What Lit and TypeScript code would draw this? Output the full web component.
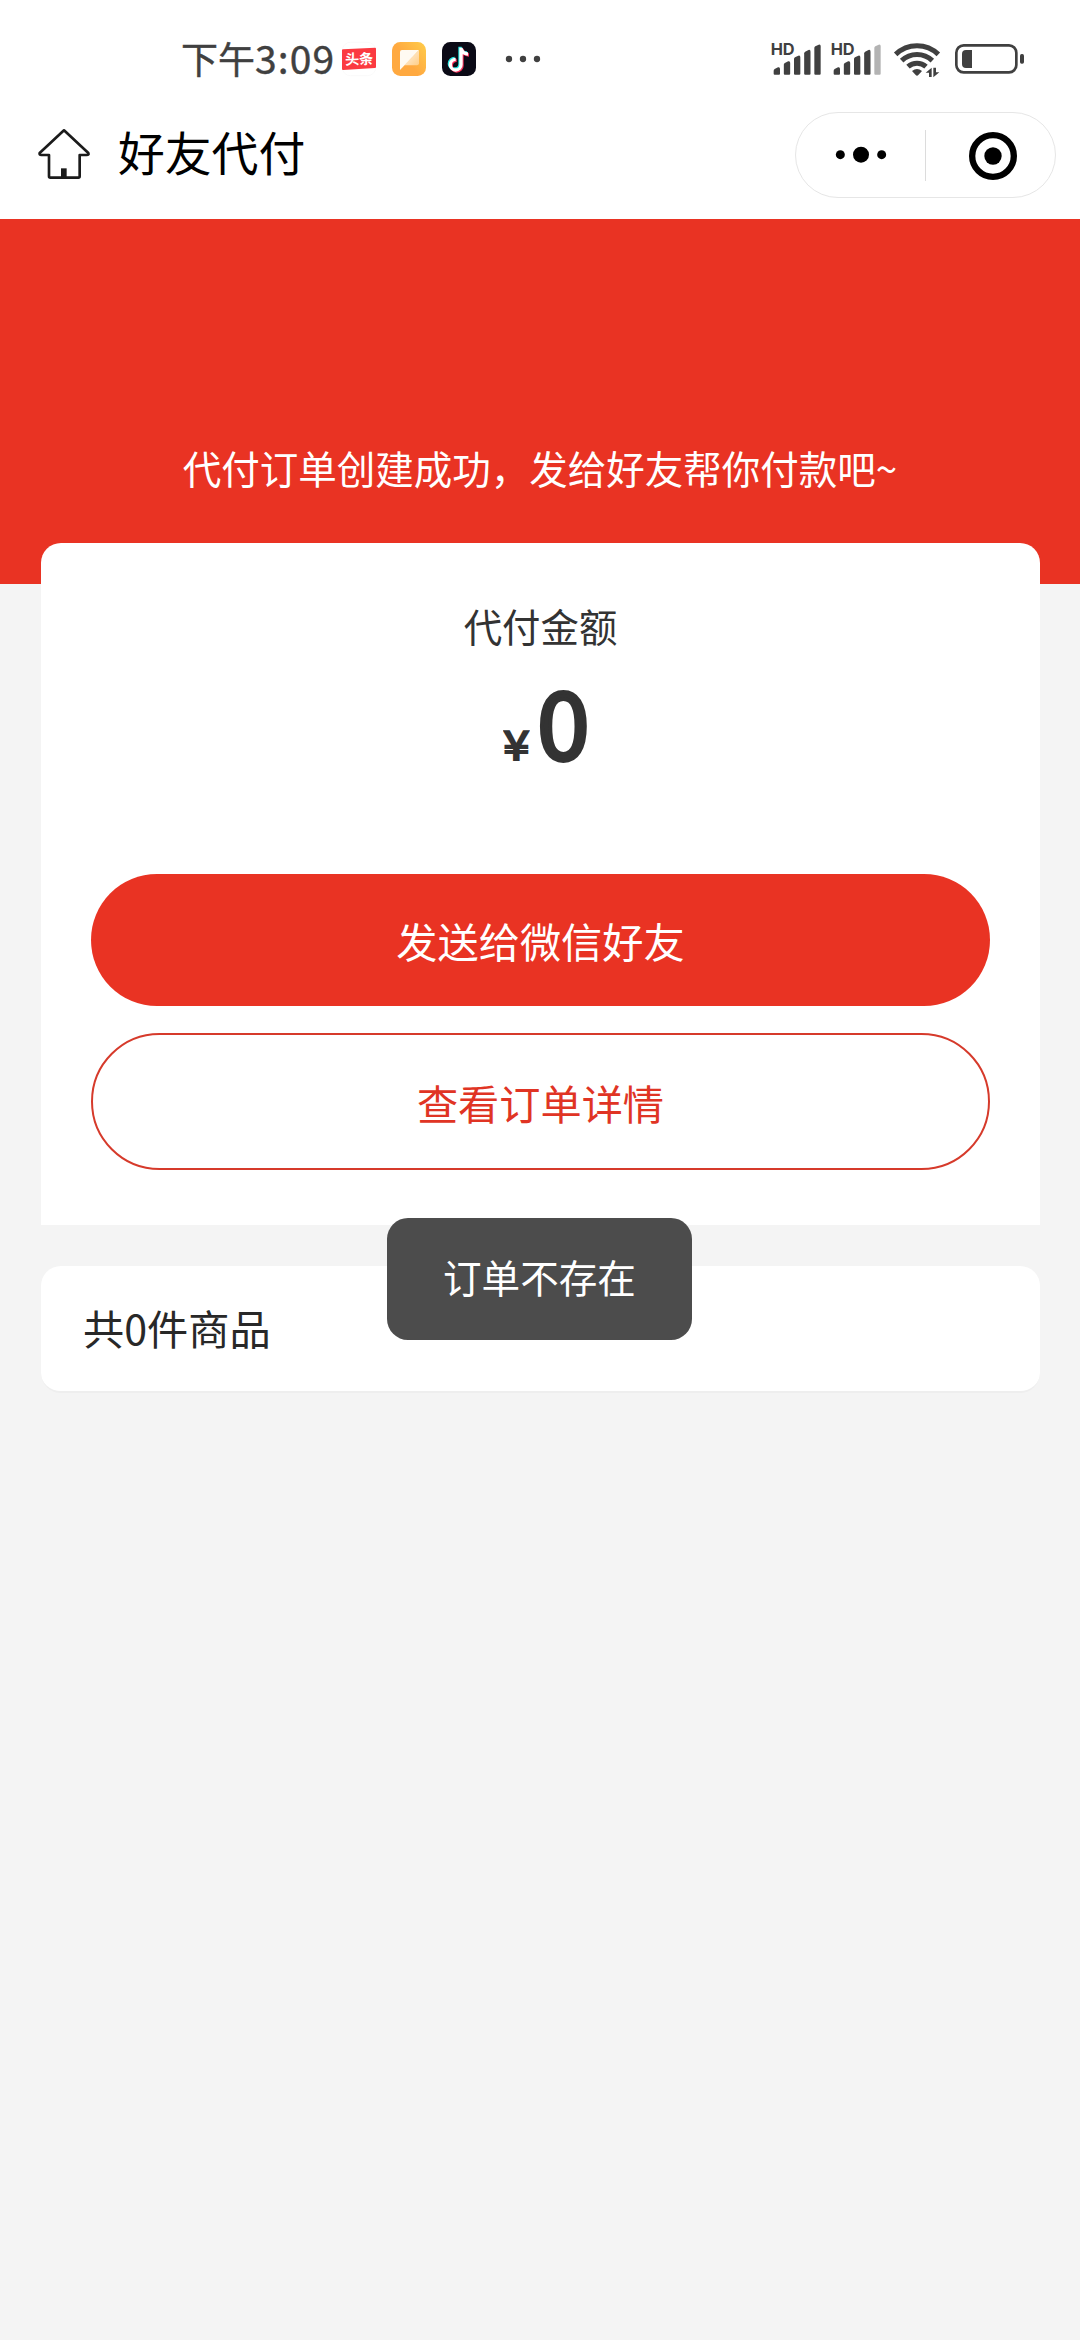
import { LitElement, html, css, svg } from "lit";
import { customElement, property } from "lit/decorators.js";

const BAR_TOPS = [142, 124, 107, 90, 74];

@customElement("signal-icon")
class SignalIcon extends LitElement {
  @property({ type: Number }) level = 5;

  static styles = css`
    :host { display: block; width: 50px; height: 40px; }
    .icon { display: block; width: 50px; height: 40px; }
    .hd { font: 700 49px Inter, "Open Sans", sans-serif; fill: #404040; }
    .bar { fill: #404040; }
    .off { fill: #b3b3b3; }
  `;

  render() {
    return html`<svg class="icon" viewBox="63 60 150 120">
      <text class="hd" x="62" y="105" textLength="72" lengthAdjust="spacingAndGlyphs">HD</text>
      ${BAR_TOPS.map((top, i) => {
        const x = 71 + i * 30.5;
        return svg`<path class=${i < this.level ? "bar" : "bar off"}
          d="M${x} 161 V${top + 10} Q${x} ${top + 7} ${x + 3} ${top + 5} L${x + 13} ${top} Q${x + 19} ${top - 2} ${x + 19} ${top + 5} V161 Q${x + 19} 164 ${x + 16} 164 H${x + 3} Q${x} 164 ${x} 161 Z"/>`;
      })}
    </svg>`;
  }
}

@customElement("status-bar")
class StatusBar extends LitElement {
  static styles = css`
    :host {
      display: flex; align-items: flex-start; box-sizing: border-box; height: 80px;
      padding: 40px 55px 0 181px; background: #fff; color: #404040;
      font-family: "Noto Sans CJK SC", sans-serif;
    }
    .time {
      display: flex; align-items: baseline; width: 161px; height: 40px; margin-top: -3px;
      line-height: 40px; white-space: nowrap; -webkit-text-stroke: 0.4px #404040;
    }
    .period { font-size: 37px; width: 74px; }
    .clock { font-size: 39px; letter-spacing: 1.1px; }
    .apps { display: flex; gap: 16px; }
    .system { display: flex; margin-left: auto; }
    .icon { display: block; height: 40px; }
    .app { width: 34px; }
    .more { width: 36px; margin-left: 13px; }
    .second { margin-left: 10px; }
    .wifi { width: 48px; margin-left: 12px; }
    .battery { width: 71px; margin-left: 13px; }
    .tag { font: 700 43px "Noto Sans CJK SC", sans-serif; fill: #fff; }
  `;

  render() {
    return html`
      <div class="time"><span class="period">下午</span><span class="clock">3:09</span></div>
      <div class="apps">
        <svg class="icon app" viewBox="546 60 102 120">
          <rect x="547" y="67" width="100" height="100" rx="24" fill="#fff" stroke="#f5f5f5" stroke-width="1.5"/>
          <path d="M546 90 Q546 88 549 88 L645 83 Q648 83 648 86 V141 Q648 144 645 144 L549 150 Q546 150 546 147 Z" fill="#fb3a41"/>
          <text class="tag" x="555" y="133" textLength="85" lengthAdjust="spacingAndGlyphs" transform="rotate(-2 597 117)">头条</text>
        </svg>
        <svg class="icon app" viewBox="696 60 102 120">
          <defs>
            <linearGradient id="amber" x1="0" y1="0.8" x2="1" y2="0"><stop offset="0.4" stop-color="#ffa940"/><stop offset="1" stop-color="#ffcd4a"/></linearGradient>
            <linearGradient id="fold" x1="0" y1="0" x2="1" y2="1"><stop offset="0.3" stop-color="#ffe9cc"/><stop offset="1" stop-color="#ffce86"/></linearGradient>
          </defs>
          <rect x="696" y="66" width="102" height="102" rx="25" fill="url(#amber)"/>
          <path d="M777 91 V130 Q777 136 771 136 H733 Z" fill="url(#fold)"/>
          <path d="M726 90 H777 L720 150 V96 Q720 90 726 90 Z" fill="#fffaf2"/>
        </svg>
        <svg class="icon app" viewBox="846 60 102 120">
          <rect x="846" y="66" width="102" height="102" rx="25" fill="#0b0a16"/>
          <g fill="none" stroke-width="10">
            <path d="M902 82 V133 A16 16 0 1 1 886 117 M902 84 Q906 100 923 101" stroke="#25e6e2" transform="translate(-2 -2)"/>
            <path d="M902 82 V133 A16 16 0 1 1 886 117 M902 84 Q906 100 923 101" stroke="#f8305a" transform="translate(4 4)"/>
            <path d="M902 82 V133 A16 16 0 1 1 886 117 M902 84 Q906 100 923 101" stroke="#fff" transform="translate(1 1)"/>
          </g>
        </svg>
        <svg class="icon more" viewBox="1035 60 108 120" fill="#404040">
          <circle cx="1047" cy="117" r="9.5"/><circle cx="1089" cy="117" r="9.5"/><circle cx="1131" cy="117" r="9.5"/>
        </svg>
      </div>
      <div class="system">
        <signal-icon .level=${5}></signal-icon>
        <signal-icon class="second" .level=${4}></signal-icon>
        <svg class="icon wifi" viewBox="429 60 144 120">
          <g fill="none" stroke="#404040" stroke-width="15">
            <path d="M437 103 A92 92 0 0 1 565 103"/>
            <path d="M455 122 A66 66 0 0 1 547 122"/>
            <path d="M474 140 A40 40 0 0 1 528 140"/>
          </g>
          <path d="M486 153 Q501 141 516 153 L505 165 Q501 169 497 165 Z" fill="#404040"/>
          <path d="M537 141 H572 V176 H525 V150 Z" fill="#fff"/>
          <path d="M545 143 V171 H537 V158 H527 Z M550 172 V143 H558 V157 H568 Z" fill="#404040"/>
        </svg>
        <svg class="icon battery" viewBox="612 60 213 120">
          <rect x="619" y="76" width="180" height="81" rx="22" fill="none" stroke="#404040" stroke-width="8"/>
          <path d="M648 90 H666 V144 H648 Q636 144 636 132 V102 Q636 90 648 90 Z" fill="#404040"/>
          <rect x="810" y="102" width="12" height="29" rx="5" fill="#404040"/>
        </svg>
      </div>
    `;
  }
}

@customElement("nav-bar")
class NavBar extends LitElement {
  @property() heading = "";

  static styles = css`
    :host {
      display: flex; align-items: flex-start; box-sizing: border-box; height: 139px;
      padding: 32px 24px 0 37px; background: #fff; color: #000;
      font-family: "Noto Sans CJK SC", sans-serif;
    }
    .home { display: block; width: 54px; height: 52px; margin-top: 16px; }
    .title { margin: 9px 0 0 27px; font-size: 46.8px; font-weight: 400; line-height: 60px; }
    .capsule {
      display: flex; align-items: center; box-sizing: border-box; width: 261px; height: 86px;
      margin-left: auto; border: 1px solid #e6e6e6; border-radius: 43px;
    }
    .half { display: flex; flex: 1; justify-content: center; }
    .divider { width: 1px; height: 51px; background: #dcdcdc; }
    .dots { display: block; width: 52px; height: 18px; }
    .ring { display: block; width: 48px; height: 48px; margin: 2px 0 0 5px; }
  `;

  render() {
    return html`
      <svg class="home" viewBox="111 84 162 156">
        <path d="M192 91 L119 159 Q117 165 124 165 H147 V229 Q147 233 151 233 H235 Q239 233 239 229 V165 H260 Q268 165 265 159 Z" fill="none" stroke="#1b1b1b" stroke-width="8" stroke-linejoin="round"/>
        <path d="M183 205 H200 V232 H183 Z" fill="#1b1b1b"/>
      </svg>
      <h1 class="title">${this.heading}</h1>
      <div class="capsule">
        <div class="half">
          <svg class="dots" viewBox="0 0 156 54"><circle cx="16" cy="26" r="13.5"/><circle cx="78" cy="26" r="24"/><circle cx="140" cy="26" r="13.5"/></svg>
        </div>
        <div class="divider"></div>
        <div class="half">
          <svg class="ring" viewBox="0 0 144 144"><circle cx="72" cy="72" r="62.5" fill="none" stroke="#000" stroke-width="19"/><circle cx="72" cy="72" r="26"/></svg>
        </div>
      </div>
    `;
  }
}

@customElement("app-root")
class AppRoot extends LitElement {
  static styles = css`
    :host {
      display: block; position: relative; box-sizing: border-box; width: 1080px; height: 2340px;
      overflow: hidden; background: #f4f4f4; color: #333;
      font-family: "Noto Sans CJK SC", sans-serif;
    }
    .hero {
      box-sizing: border-box; height: 365px; padding-top: 220px; background: #e93323;
      color: #fff; font-size: 38.5px; line-height: 57px; text-align: center;
    }
    .card {
      box-sizing: border-box; width: 999px; height: 682px; margin: -41px 0 0 41px;
      padding: 54px 50px 0; border-radius: 20px 20px 0 0; background: #fff;
    }
    .label { font-size: 38.4px; line-height: 56px; text-align: center; }
    .amount {
      display: flex; align-items: baseline; justify-content: center; gap: 10px; height: 205px;
      margin-top: 16px; padding-left: 13px; box-sizing: border-box; font-weight: 400;
    }
    .currency {
      font-size: 41px; line-height: 50px; transform: scaleX(1.15);
      -webkit-text-stroke: 2px #333;
    }
    .value { font-size: 94px; line-height: 101px; -webkit-text-stroke: 4px #333; }
    .button {
      display: block; box-sizing: border-box; width: 100%; border: 0; padding: 0;
      font: 400 41.2px/60px "Noto Sans CJK SC", sans-serif; text-align: center;
    }
    .primary { height: 132px; border-radius: 66px; background: #e93323; color: #fff; }
    .outline {
      height: 137px; margin-top: 27px; border: 2px solid #d63a2b; border-radius: 68.5px;
      background: #fff; color: #e03424;
    }
    .goods {
      box-sizing: border-box; width: 999px; height: 127px; margin: 41px 0 0 41px;
      padding: 31px 42px 0; border-bottom: 2px solid #eee; border-radius: 20px;
      background: #fff; color: #282828; font-size: 41.2px; line-height: 60px;
    }
    .toast {
      position: absolute; left: 387px; top: 1218px; box-sizing: border-box; width: 305px;
      height: 122px; border-radius: 21px; background: #4c4c4c; color: #fff;
      font-size: 38.6px; line-height: 117px; text-align: center;
    }
  `;

  render() {
    return html`
      <status-bar></status-bar>
      <nav-bar heading="好友代付"></nav-bar>
      <div class="hero">代付订单创建成功，发给好友帮你付款吧~</div>
      <section class="card">
        <div class="label">代付金额</div>
        <div class="amount"><span class="currency">¥</span><span class="value">0</span></div>
        <button class="button primary">发送给微信好友</button>
        <button class="button outline">查看订单详情</button>
      </section>
      <section class="goods">共0件商品</section>
      <div class="toast" role="status">订单不存在</div>
    `;
  }
}
